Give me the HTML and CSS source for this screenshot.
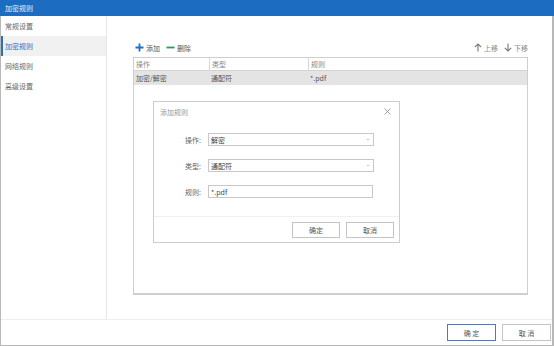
FILE: index.html
```html
<!DOCTYPE html>
<html lang="zh-CN">
<head>
    <meta charset="UTF-8">
    <title>加密规则</title>
    <link rel="stylesheet" href="styles.css">
</head>
<body>
    <div class="window">
        <div class="titlebar">加密规则</div>
        <div class="content">
            <div class="sidebar">
                <div class="nav-item">常规设置</div>
                <div class="nav-item active">加密规则</div>
                <div class="nav-item">网络规则</div>
                <div class="nav-item">高级设置</div>
            </div>
            <div class="main">
                <div class="toolbar">
                    <div class="tools">
                        <span class="tool">
                            <svg width="9" height="9" viewBox="0 0 9 9"><path d="M4.5 0.5v8M0.5 4.5h8" stroke="#1e6fc6" stroke-width="1.8"/></svg>
                            添加
                        </span>
                        <span class="tool">
                            <svg width="9" height="9" viewBox="0 0 9 9"><path d="M0.5 4.5h8" stroke="#2e9a5a" stroke-width="1.8"/></svg>
                            删除
                        </span>
                    </div>
                    <div class="tools">
                        <span class="tool muted">
                            <svg width="8" height="9" viewBox="0 0 8 9"><path d="M4 8.5V1M0.8 4.2L4 1l3.2 3.2" stroke="#777" stroke-width="1.1" fill="none"/></svg>
                            上移
                        </span>
                        <span class="tool muted">
                            <svg width="8" height="9" viewBox="0 0 8 9"><path d="M4 0.5V8M0.8 4.8L4 8l3.2-3.2" stroke="#777" stroke-width="1.1" fill="none"/></svg>
                            下移
                        </span>
                    </div>
                </div>
                <div class="grid">
                    <div class="row head">
                        <div class="cell c1">操作</div>
                        <div class="cell c2">类型</div>
                        <div class="cell c3">规则</div>
                    </div>
                    <div class="row selected">
                        <div class="cell c1">加密/解密</div>
                        <div class="cell c2">通配符</div>
                        <div class="cell c3">*.pdf</div>
                    </div>
                </div>
            </div>
        </div>
        <div class="footer">
            <button class="btn primary">确 定</button>
            <button class="btn">取 消</button>
        </div>

        <div class="dialog">
            <div class="dialog-title">
                <span>添加规则</span>
                <svg width="7" height="7" viewBox="0 0 7 7"><path d="M0.5 0.5l6 6M6.5 0.5l-6 6" stroke="#888" stroke-width="0.8"/></svg>
            </div>
            <div class="form">
                <div class="field">
                    <label>操作:</label>
                    <div class="input select">解密<span class="caret"></span></div>
                </div>
                <div class="field">
                    <label>类型:</label>
                    <div class="input select">通配符<span class="caret"></span></div>
                </div>
                <div class="field">
                    <label>规则:</label>
                    <div class="input">*.pdf</div>
                </div>
            </div>
            <div class="dialog-footer">
                <button class="btn small">确定</button>
                <button class="btn small">取消</button>
            </div>
        </div>
    </div>
</body>
</html>
```

FILE: styles.css
```css
body {
    margin: 0;
    font-family: "Noto Sans CJK SC", "Noto Sans", sans-serif;
    font-size: 7px;
    color: #555;
    background: #fff;
}

.window {
    position: relative;
    width: 554px;
    height: 346px;
    box-sizing: border-box;
    border-left: 1px solid #b8b8b8;
    border-right: 2px solid #b8b8b8;
    border-bottom: 1px solid #b8b8b8;
    display: flex;
    flex-direction: column;
}

.titlebar {
    height: 16px;
    line-height: 16px;
    margin-left: -1px;
    margin-right: -2px;
    padding-left: 5px;
    background: #1c6dc1;
    color: #e8f0fa;
}

.content {
    display: flex;
    height: 303px;
}

.sidebar {
    width: 105px;
    border-right: 1px solid #e6e6e6;
}

.nav-item {
    height: 20px;
    line-height: 20px;
    padding-left: 4px;
    color: #666;
}

.nav-item.active {
    background: #f1f1f1;
    color: #2a6fc0;
    border-left: 2px solid #2a6fc0;
    padding-left: 2px;
}

.main {
    flex: 1;
    padding: 26px 24px 24px 26px;
    display: flex;
    flex-direction: column;
}

.toolbar {
    display: flex;
    justify-content: space-between;
    align-items: center;
    height: 11px;
    margin-left: 2px;
    margin-bottom: 4px;
}

.tools {
    display: flex;
    gap: 6px;
}

.tool {
    display: flex;
    align-items: center;
    gap: 2px;
    color: #555;
}

.tool.muted {
    color: #888;
}

.grid {
    flex: 1;
    border: 1px solid #cfcfcf;
    border-bottom: 2px solid #cfcfcf;
    background: #fff;
}

.row {
    display: flex;
    height: 14px;
    line-height: 14px;
}

.row.head {
    height: 12px;
    line-height: 12px;
    border-bottom: 1px solid #d4d4d4;
    color: #888;
}

.row.head .c2,
.row.head .c3 {
    border-left: 1px solid #d8d8d8;
}

.row.selected {
    background: #e4e4e4;
    color: #555;
}

.cell {
    padding-left: 2px;
    box-sizing: border-box;
}

.c1 {
    width: 75px;
}

.c2 {
    width: 99px;
}

.c3 {
    flex: 1;
}

.footer {
    flex: 1;
    border-top: 1px solid #eeeeee;
    display: flex;
    justify-content: flex-end;
    align-items: center;
    gap: 6px;
    padding-right: 1px;
}

.btn {
    width: 49px;
    height: 17px;
    padding: 0;
    background: #fff;
    border: 1px solid #c4c4c4;
    font-family: inherit;
    font-size: 7px;
    color: #555;
}

.btn.primary {
    border: 1px solid #3d7fce;
}

.dialog {
    position: absolute;
    left: 152px;
    top: 101px;
    width: 247px;
    height: 142px;
    box-sizing: border-box;
    border: 1px solid #cdcdcd;
    background: #fff;
    display: flex;
    flex-direction: column;
}

.dialog-title {
    height: 19px;
    display: flex;
    justify-content: space-between;
    align-items: center;
    padding: 0 8px 0 6px;
    color: #999;
}

.form {
    flex: 1;
    padding-top: 12px;
    display: flex;
    flex-direction: column;
    gap: 13px;
}

.field {
    display: flex;
    align-items: center;
}

.field label {
    width: 47px;
    text-align: right;
    padding-right: 7px;
    color: #666;
}

.input {
    position: relative;
    width: 165px;
    height: 13px;
    line-height: 13px;
    box-sizing: border-box;
    border: 1px solid #c8c8c8;
    padding-left: 2px;
    color: #444;
}

.input.select {
    width: 166px;
}

.caret {
    position: absolute;
    right: 4px;
    top: 5px;
    border-left: 1.5px solid transparent;
    border-right: 1.5px solid transparent;
    border-top: 1.5px solid #888;
}

.dialog-footer {
    height: 25px;
    border-top: 1px solid #f0f0f0;
    display: flex;
    justify-content: flex-end;
    align-items: center;
    gap: 6px;
    padding-right: 5px;
}

.btn.small {
    width: 48px;
    height: 16px;
}
```
